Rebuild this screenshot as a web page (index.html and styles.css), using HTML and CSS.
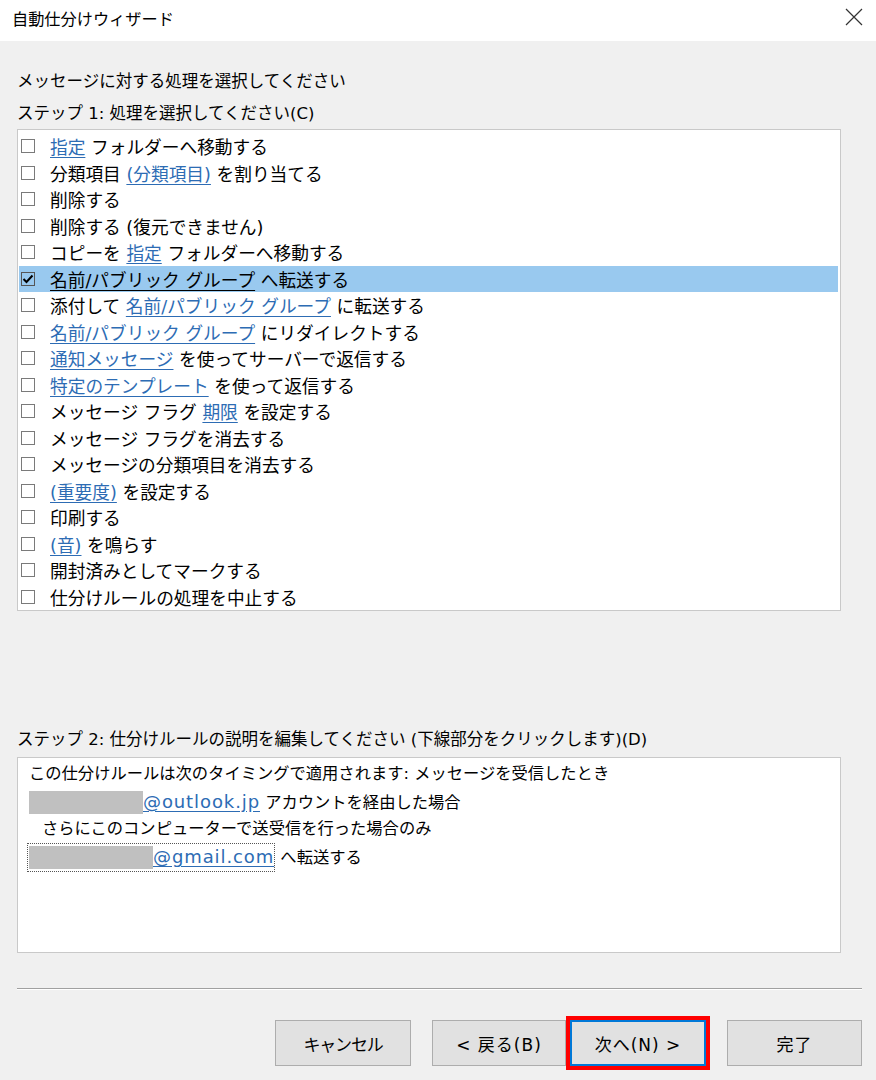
FILE: index.html
```html
<!DOCTYPE html>
<html lang="ja">
<head>
    <meta charset="UTF-8">
    <meta name="viewport" content="width=device-width, initial-scale=1.0">
    <title>自動仕分けウィザード</title>
    <link rel="stylesheet" href="styles.css">
</head>
<body>
    <div class="window">
        <header class="titlebar">
            <span class="title">自動仕分けウィザード</span>
            <svg class="close" width="18" height="18" viewBox="0 0 18 18">
                <path d="M1 1L17 17M17 1L1 17" stroke="#333" stroke-width="1.2" fill="none"/>
            </svg>
        </header>

        <main class="dialog">
            <p class="label">メッセージに対する処理を選択してください</p>
            <p class="label">ステップ 1: 処理を選択してください(C)</p>

            <ul class="action-list">
                <li class="action"><span class="check"></span><span><a class="link">指定</a> フォルダーへ移動する</span></li>
                <li class="action"><span class="check"></span><span>分類項目 <a class="link">(分類項目)</a> を割り当てる</span></li>
                <li class="action"><span class="check"></span><span>削除する</span></li>
                <li class="action"><span class="check"></span><span>削除する (復元できません)</span></li>
                <li class="action"><span class="check"></span><span>コピーを <a class="link">指定</a> フォルダーへ移動する</span></li>
                <li class="action selected"><span class="check checked">
                    <svg width="12" height="12" viewBox="0 0 12 12"><path d="M1.5 6L4.5 9L10.5 2.5" stroke="#000" stroke-width="2" fill="none"/></svg>
                </span><span><a class="link">名前/パブリック グループ</a> へ転送する</span></li>
                <li class="action"><span class="check"></span><span>添付して <a class="link">名前/パブリック グループ</a> に転送する</span></li>
                <li class="action"><span class="check"></span><span><a class="link">名前/パブリック グループ</a> にリダイレクトする</span></li>
                <li class="action"><span class="check"></span><span><a class="link">通知メッセージ</a> を使ってサーバーで返信する</span></li>
                <li class="action"><span class="check"></span><span><a class="link">特定のテンプレート</a> を使って返信する</span></li>
                <li class="action"><span class="check"></span><span>メッセージ フラグ <a class="link">期限</a> を設定する</span></li>
                <li class="action"><span class="check"></span><span>メッセージ フラグを消去する</span></li>
                <li class="action"><span class="check"></span><span>メッセージの分類項目を消去する</span></li>
                <li class="action"><span class="check"></span><span><a class="link">(重要度)</a> を設定する</span></li>
                <li class="action"><span class="check"></span><span>印刷する</span></li>
                <li class="action"><span class="check"></span><span><a class="link">(音)</a> を鳴らす</span></li>
                <li class="action"><span class="check"></span><span>開封済みとしてマークする</span></li>
                <li class="action"><span class="check"></span><span>仕分けルールの処理を中止する</span></li>
            </ul>

            <p class="label step2">ステップ 2: 仕分けルールの説明を編集してください (下線部分をクリックします)(D)</p>

            <div class="description">
                <div class="desc-line">この仕分けルールは次のタイミングで適用されます: メッセージを受信したとき</div>
                <div class="desc-line"><span class="redacted short"></span><a class="link email">@outlook.jp</a> アカウントを経由した場合</div>
                <div class="desc-line indent">さらにこのコンピューターで送受信を行った場合のみ</div>
                <div class="desc-line"><span class="focus"><span class="redacted long"></span><a class="link email">@gmail.com</a></span> へ転送する</div>
            </div>

            <div class="separator"></div>

            <div class="buttons">
                <button class="btn cancel">キャンセル</button>
                <button class="btn back">&lt; 戻る(B)</button>
                <button class="btn next">次へ(N) &gt;</button>
                <button class="btn finish">完了</button>
            </div>
        </main>
    </div>
</body>
</html>
```

FILE: styles.css
```css
body {
    margin: 0;
    padding: 0;
    font-family: "DejaVu Sans", "Noto Sans CJK JP", sans-serif;
    color: #000;
    background: #f0f0f0;
}

.window {
    width: 876px;
    height: 1080px;
    display: flex;
    flex-direction: column;
    overflow: hidden;
}

.titlebar {
    height: 41px;
    background: #ffffff;
    display: flex;
    align-items: center;
    justify-content: space-between;
    padding: 0 13px 0 12px;
    box-sizing: border-box;
    flex-shrink: 0;
}

.title {
    font-size: 16.2px;
    margin-top: -5px;
}

.close {
    margin-top: -7px;
}

.dialog {
    flex-grow: 1;
    padding: 25px 14px 0 17px;
}

.label {
    margin: 0;
    font-size: 16.5px;
    line-height: 32px;
    white-space: nowrap;
}

.action-list {
    list-style: none;
    margin: -1px 21px 0 0;
    padding: 3px 2px 0 1px;
    background: #ffffff;
    border: 1px solid #c9c9c9;
}

.action {
    height: 26.5px;
    display: flex;
    align-items: center;
    gap: 15px;
    padding-left: 2px;
    font-size: 17.7px;
    white-space: nowrap;
}

.action.selected {
    background: #99c9ef;
}

.action.selected .link {
    color: #000;
    text-decoration-color: #000;
}

.check {
    width: 12px;
    height: 12px;
    border: 1px solid #7a7a7a;
    background: #fff;
    flex-shrink: 0;
    display: flex;
    align-items: center;
    justify-content: center;
}

.check.checked {
    background: transparent;
    border-color: #555;
}

.link {
    color: #2d6cb4;
    text-decoration: underline;
    text-underline-offset: 3px;
}

.email {
    font-size: 18px;
    letter-spacing: 0.9px;
}

.step2 {
    margin-top: 113px;
}

.description {
    margin: 1px 21px 0 0;
    height: 196px;
    box-sizing: border-box;
    padding: 2px 11px;
    background: #ffffff;
    border: 1px solid #c9c9c9;
    font-size: 16.3px;
}

.desc-line {
    height: 27.6px;
    line-height: 27.6px;
    white-space: nowrap;
}

.desc-line.indent {
    padding-left: 13px;
}

.redacted {
    display: inline-block;
    height: 23px;
    background: #c0c0c0;
    vertical-align: -6px;
}

.redacted.short {
    width: 114px;
}

.redacted.long {
    width: 124px;
}

.focus {
    display: inline-block;
    padding: 1px 0 1px 1px;
    margin-left: -2px;
    border: 1px dotted #555;
    line-height: 24px;
}

.separator {
    margin-top: 35px;
    height: 1px;
    background: #a0a0a0;
    border-bottom: 1px solid #ffffff;
}

.buttons {
    display: flex;
    justify-content: flex-end;
    gap: 21px;
    margin-top: 30px;
}

.btn {
    width: 136px;
    height: 46px;
    font-family: inherit;
    font-size: 17px;
    letter-spacing: 1px;
    color: #000;
    background: #e1e1e1;
    border: 1px solid #adadad;
    padding: 0;
}

.btn.cancel {
    letter-spacing: -1.2px;
}

.btn.back {
    width: 134px;
    margin-right: -17px;
}

.btn.next {
    border: 2px solid #0078d7;
    outline: 4px solid #ff0000;
}

.btn.finish {
    width: 135px;
}
```
